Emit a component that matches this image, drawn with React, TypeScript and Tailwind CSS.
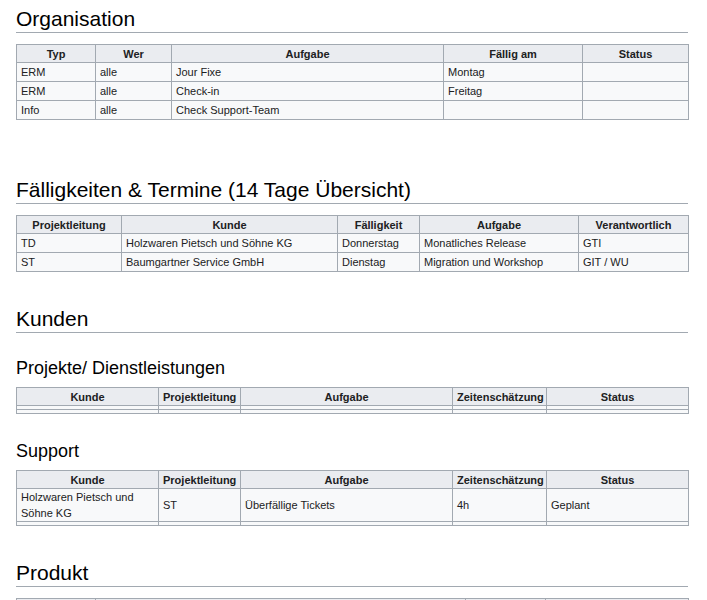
const th = "border border-[#a2a9b1] bg-[#eaecf0] px-1 h-[18px] font-bold text-center";
const td = "border border-[#a2a9b1] px-1 h-[19px] text-left align-middle";

function Table({ cols, head, rows, empty = 0 }: { cols: number[]; head: string[]; rows: string[][]; empty?: number }) {
  return (
    <table className="w-[672px] border-collapse bg-[#f8f9fa] text-[11px] leading-[16px] text-[#202122] table-fixed">
      <colgroup>
        {cols.map((w, i) => (
          <col key={i} style={{ width: w }} />
        ))}
      </colgroup>
      <thead>
        <tr>
          {head.map((h) => (
            <th key={h} className={th}>{h}</th>
          ))}
        </tr>
      </thead>
      <tbody>
        {rows.map((r, i) => (
          <tr key={i}>
            {r.map((c, j) => (
              <td key={j} className={td}>{c}</td>
            ))}
          </tr>
        ))}
        {Array.from({ length: empty }).map((_, i) => (
          <tr key={"e" + i}>
            {cols.map((_, j) => (
              <td key={j} className="border border-[#a2a9b1] h-[4px] p-0"></td>
            ))}
          </tr>
        ))}
      </tbody>
    </table>
  );
}

function H2({ children, top }: { children: string; top: string }) {
  return (
    <h2 className={`${top} mb-[11px] border-b border-[#a2a9b1] text-[21px] leading-[26px] text-[#000] w-[672px]`}>
      {children}
    </h2>
  );
}

function H3({ children, top }: { children: string; top: string }) {
  return <h3 className={`${top} mb-[8px] text-[18px] leading-[22px] text-[#000]`}>{children}</h3>;
}

export default function App() {
  return (
    <div className="bg-white pl-4 pt-[6px] min-h-[600px] overflow-hidden h-[600px]" style={{ fontFamily: '"Liberation Sans", Arial, sans-serif' }}>
      <H2 top="mt-0">Organisation</H2>
      <Table
        cols={[79, 76, 272, 139, 106]}
        head={["Typ", "Wer", "Aufgabe", "Fällig am", "Status"]}
        rows={[
          ["ERM", "alle", "Jour Fixe", "Montag", ""],
          ["ERM", "alle", "Check-in", "Freitag", ""],
          ["Info", "alle", "Check Support-Team", "", ""],
        ]}
      />
      <H2 top="mt-[57px]">Fälligkeiten & Termine (14 Tage Übersicht)</H2>
      <Table
        cols={[105, 216, 82, 159, 110]}
        head={["Projektleitung", "Kunde", "Fälligkeit", "Aufgabe", "Verantwortlich"]}
        rows={[
          ["TD", "Holzwaren Pietsch und Söhne KG", "Donnerstag", "Monatliches Release", "GTI"],
          ["ST", "Baumgartner Service GmbH", "Dienstag", "Migration und Workshop", "GIT / WU"],
        ]}
      />
      <H2 top="mt-[34px]">Kunden</H2>
      <H3 top="mt-[24px]">Projekte/ Dienstleistungen</H3>
      <Table
        cols={[142, 82, 212, 94, 142]}
        head={["Kunde", "Projektleitung", "Aufgabe", "Zeitenschätzung", "Status"]}
        rows={[]}
        empty={2}
      />
      <H3 top="mt-[26px]">Support</H3>
      <Table
        cols={[142, 82, 212, 94, 142]}
        head={["Kunde", "Projektleitung", "Aufgabe", "Zeitenschätzung", "Status"]}
        rows={[["Holzwaren Pietsch und Söhne KG", "ST", "Überfällige Tickets", "4h", "Geplant"]]}
        empty={1}
      />
      <H2 top="mt-[34px]">Produkt</H2>
      <Table cols={[79, 370, 80, 143]} head={["", "", "", ""]} rows={[]} />
    </div>
  );
}
